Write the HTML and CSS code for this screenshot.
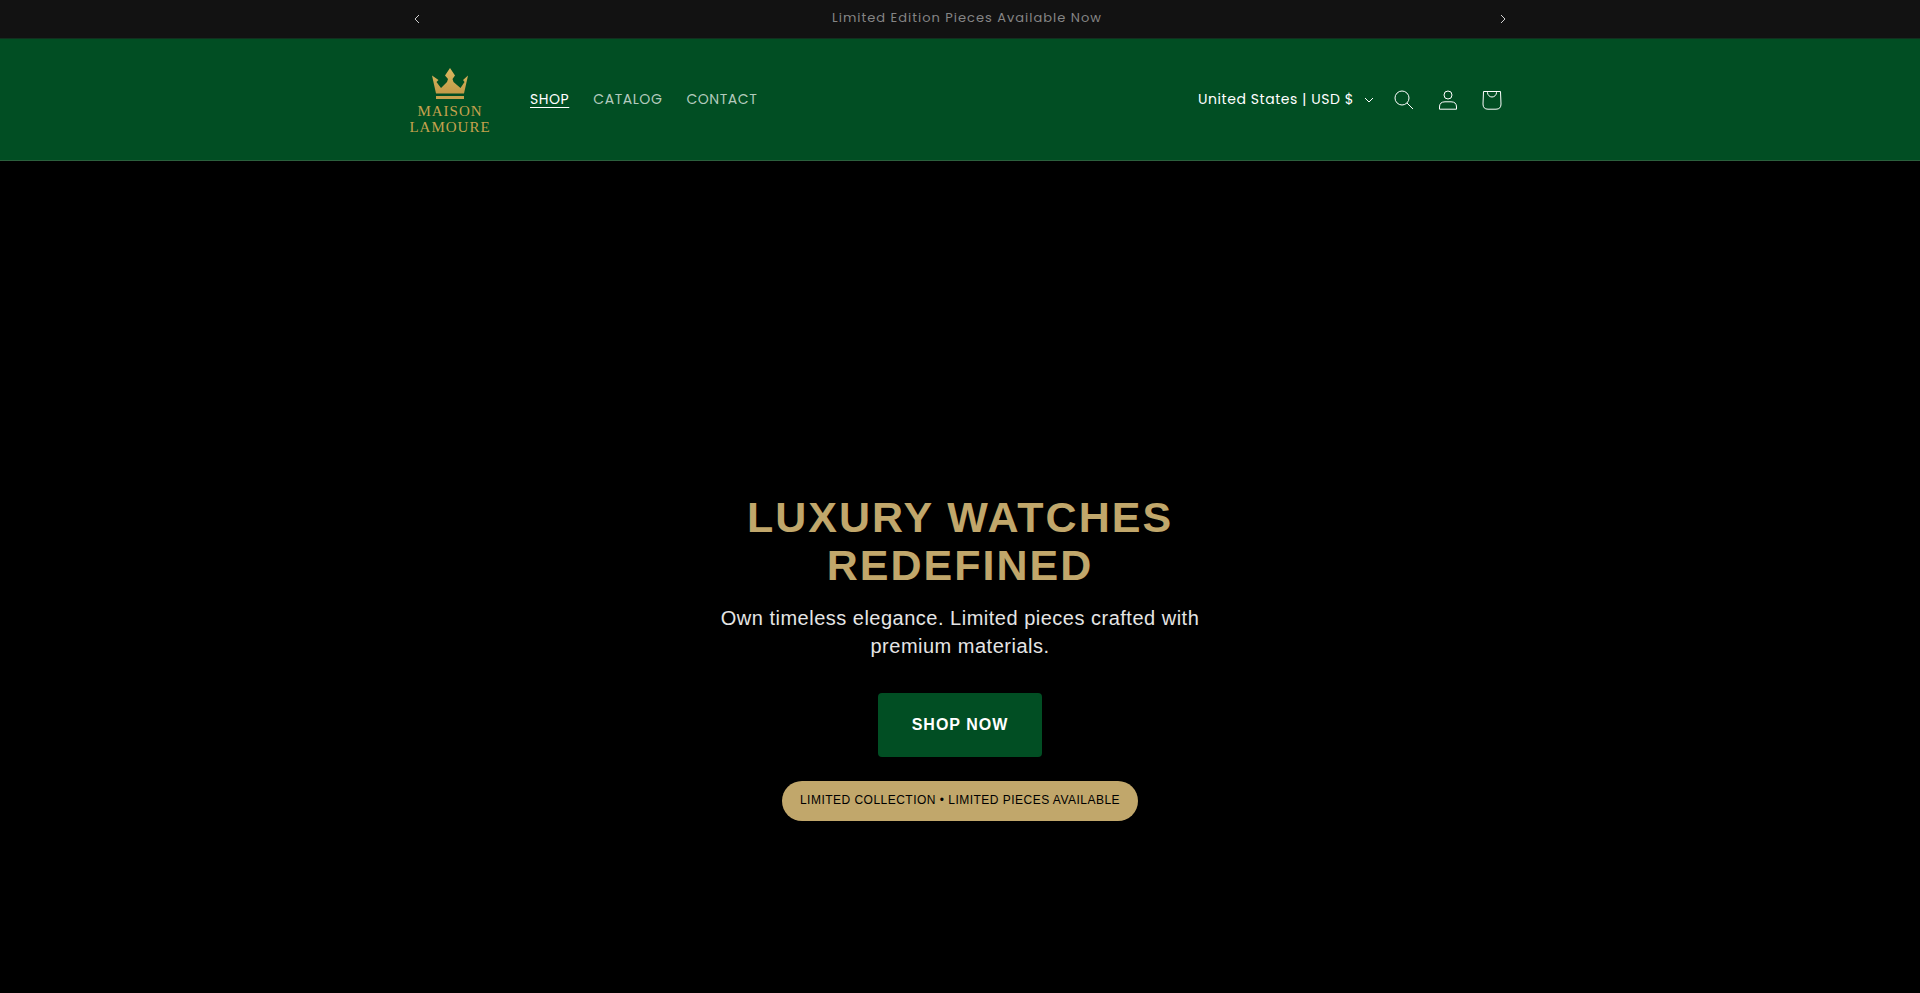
FILE: index.html
```
<!DOCTYPE html>
<html lang="en">
<head>
  <meta charset="UTF-8">
  <meta name="viewport" content="width=device-width, initial-scale=1.0">
  <title>Maison Lamoure</title>
  <link rel="stylesheet" href="styles.css">
</head>
<body>

  <!-- Announcement bar -->
  <div class="announcement-bar">
    <div class="announcement-inner page-width">
      <button class="slider-button" type="button" aria-label="Previous announcement">
        <svg class="icon-arrow" viewBox="0 0 10 10"><path d="M7 1 L3 5 L7 9"/></svg>
      </button>
      <p class="announcement-message">Limited Edition Pieces Available Now</p>
      <button class="slider-button slider-button-next" type="button" aria-label="Next announcement">
        <svg class="icon-arrow" viewBox="0 0 10 10"><path d="M3 1 L7 5 L3 9"/></svg>
      </button>
    </div>
  </div>

  <!-- Header -->
  <header class="header">
    <div class="header-inner page-width">
      <a href="#" class="logo" aria-label="Maison Lamoure">
        <svg viewBox="0 0 80 80">
          <defs>
            <linearGradient id="gold" x1="0" y1="0" x2="0" y2="1">
              <stop offset="0" stop-color="#dcb95f"/>
              <stop offset="1" stop-color="#c29a48"/>
            </linearGradient>
          </defs>
          <path fill="url(#gold)" d="M40 8 L45 15.500 L42.500 19 L43.500 22 L50.500 28 L54.500 22 L53 20 L58 15.500 L54 33.500 H26 L22 15.500 L28.500 20 L26.500 22 L31 28 L37 22 L38 19 L35 15.500 Z"/>
          <rect x="26" y="36" width="28" height="3" fill="#c6a24e"/>
          <text class="logo-text" x="40" y="56">MAISON</text>
          <text class="logo-text" x="40" y="72">LAMOURE</text>
        </svg>
      </a>
      <nav class="menu">
        <a href="#" class="menu-item active">SHOP</a>
        <a href="#" class="menu-item">CATALOG</a>
        <a href="#" class="menu-item">CONTACT</a>
      </nav>
      <div class="header-icons">
        <button class="country-button" type="button">
          <span>United States | USD $</span>
          <svg class="icon-caret" viewBox="0 0 10 6"><path d="M1 1 L5 5 L9 1"/></svg>
        </button>
        <button class="header-icon" type="button" aria-label="Search">
          <svg viewBox="0 0 20 20"><circle cx="8" cy="8" r="7"/><path d="M13 13 L19 19"/></svg>
        </button>
        <a href="#" class="header-icon" aria-label="Log in">
          <svg viewBox="0 0 20 20"><circle cx="10" cy="5" r="4"/><path d="M1.500 19.200 V17 Q1.500 11.800 7 11.800 H13 Q18.500 11.800 18.500 17 V19.200 Z"/></svg>
        </a>
        <a href="#" class="header-icon" aria-label="Cart">
          <svg viewBox="0 0 20 20"><path d="M1.500 1.500 H18.500 L19 14 Q19 19.200 14 19.200 H6 Q1 19.200 1 14 Z M5.500 1.500 V2.500 A4.500 4.500 0 0 0 14.500 2.500 V1.500"/></svg>
        </a>
      </div>
    </div>
  </header>

  <!-- Hero -->
  <main class="hero">
    <div class="hero-content">
      <h1>LUXURY WATCHES REDEFINED</h1>
      <p class="hero-text">Own timeless elegance. Limited pieces crafted with premium materials.</p>
      <a href="#" class="hero-button">SHOP NOW</a>
      <div class="hero-badge">LIMITED COLLECTION • LIMITED PIECES AVAILABLE</div>
    </div>
  </main>

</body>
</html>
```

FILE: styles.css
```
* {
  box-sizing: border-box;
}

body {
  margin: 0;
  background-color: #000;
  color: #fff;
  font-family: Poppins, Inter, sans-serif;
}

button {
  padding: 0;
  border: none;
  background: none;
  color: inherit;
  font-family: inherit;
  cursor: pointer;
}

a {
  color: inherit;
  text-decoration: none;
}

svg {
  display: block;
  fill: none;
}

.page-width {
  max-width: 1200px;
  margin: 0 auto;
  padding: 0 50px;
}

/* Announcement bar */
.announcement-bar {
  background-color: #121212;
  border-bottom: 1px solid #12301f;
}

.announcement-inner {
  display: flex;
  align-items: center;
  height: 38px;
}

.slider-button {
  display: flex;
  width: 32px;
  height: 38px;
  align-items: center;
  padding: 0 2px;
}

.slider-button-next {
  justify-content: flex-end;
}

.icon-arrow {
  width: 10px;
  height: 10px;
  stroke: #d0d0d0;
}

.announcement-message {
  flex: 1;
  margin: 0;
  padding: 0 0 2px 14px;
  color: #858585;
  font-size: 13px;
  letter-spacing: 1px;
  text-align: center;
}

/* Header */
.header {
  background-color: #014e23;
  border-bottom: 1px solid #2b5f3d;
}

.header-inner {
  display: flex;
  align-items: center;
  height: 121px;
}

.logo svg {
  width: 80px;
  height: 80px;
}

.logo-text {
  fill: #c6a24e;
  font-family: "Liberation Serif", serif;
  font-size: 15px;
  letter-spacing: 1px;
  text-anchor: middle;
}

.menu {
  display: flex;
  gap: 24px;
  margin-left: 40px;
}

.menu-item {
  color: #b3cabd;
  font-size: 14px;
  letter-spacing: 0.04em;
}

.menu-item.active {
  color: #fff;
  text-decoration: underline;
  text-underline-offset: 3px;
}

.header-icons {
  display: flex;
  align-items: center;
  margin-left: auto;
  margin-right: -4px;
}

.country-button {
  display: flex;
  align-items: center;
  gap: 10px;
  margin-right: 8px;
  font-size: 14px;
  letter-spacing: 0.04em;
}

.icon-caret {
  width: 10px;
  height: 6px;
  stroke: #fff;
}

.header-icon {
  display: flex;
  align-items: center;
  justify-content: center;
  width: 44px;
  height: 44px;
}

.header-icon svg {
  width: 20px;
  height: 20px;
  stroke: #fff;
}

/* Hero */
.hero {
  display: flex;
  align-items: center;
  justify-content: center;
  min-height: 100vh;
  padding-bottom: 2px;
  font-family: "Liberation Sans", Arial, sans-serif;
  text-align: center;
}

.hero-content {
  display: flex;
  flex-direction: column;
  align-items: center;
  max-width: 500px;
}

h1 {
  margin: 0 0 15px;
  color: #c1a76b;
  font-size: 43px;
  line-height: 48px;
  letter-spacing: 2px;
}

.hero-text {
  margin: 0 0 33px;
  color: #e5e5e5;
  font-size: 20px;
  line-height: 28px;
  letter-spacing: 0.025em;
}

.hero-button {
  margin-bottom: 24px;
  padding: 0 34px;
  border-radius: 4px;
  background-color: #014e23;
  font-size: 16px;
  font-weight: bold;
  line-height: 64px;
  letter-spacing: 1px;
}

.hero-badge {
  padding: 0 18px 2px;
  border-radius: 20px;
  background-color: #c1a76b;
  color: #000;
  font-size: 12px;
  line-height: 38px;
  letter-spacing: 0.04em;
}
```
